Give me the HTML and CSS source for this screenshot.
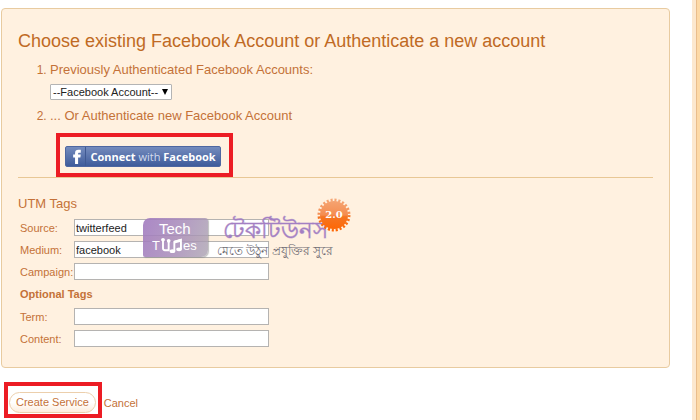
FILE: index.html
```html
<!DOCTYPE html>
<html lang="en">
<head>
<meta charset="utf-8">
<title>Create Service</title>
<link rel="stylesheet" href="styles.css">
</head>
<body>
<div class="page">
  <main class="content">
    <form>
      <div class="panel">
        <h1>Choose existing Facebook Account or Authenticate a new account</h1>
        <ol class="steps">
          <li>
            <label for="account">Previously Authenticated Facebook Accounts:</label>
            <div class="picker">
              <select id="account"><option>--Facebook Account--</option></select>
              <svg class="arrow" viewBox="0 0 6 6" aria-hidden="true"><path d="M0 0h6L3 6z"/></svg>
            </div>
          </li>
          <li><span>... Or Authenticate new Facebook Account</span></li>
        </ol>
        <div class="highlight connect-box">
          <button type="button" class="connect">
            <span class="fb"><svg viewBox="0 0 20 20" aria-hidden="true"><path d="M9 18v-7H7V8h2V6.500C9 4 10.300 3 12.500 3H15v3h-1.500c-1 0-1.300.3-1.300 1.200V8H15l-.4 3h-2.400v7z"/></svg></span>
            <span class="connect-text"><b>Connect</b> with <b>Facebook</b></span>
          </button>
        </div>
        <hr>
        <section class="tags">
          <h2>UTM Tags</h2>
          <div class="fields">
            <label for="source">Source:</label><input id="source" type="text" value="twitterfeed">
            <label for="medium">Medium:</label><input id="medium" type="text" value="facebook">
            <label for="campaign">Campaign:</label><input id="campaign" type="text">
            <h3>Optional Tags</h3>
            <label for="term">Term:</label><input id="term" type="text">
            <label for="content">Content:</label><input id="content" type="text">
          </div>
          <div class="watermark">
            <div class="badge">
              <span>Tech</span>
              <span class="tunes">T<svg viewBox="0 0 24 18" aria-hidden="true"><path class="line" d="M3 3v9q0 2 2 2h4V4M15 15V5l7-2v10"/><path d="M15 4l7-2v3l-7 2z"/><circle cx="3" cy="3" r="2"/><circle cx="9" cy="4" r="2"/><ellipse cx="13" cy="15" rx="3" ry="2"/><ellipse cx="20" cy="13" rx="3" ry="2"/></svg>es</span>
            </div>
            <div class="brand" lang="bn">
              <span class="name">টেকটিউনস</span>
              <span class="slogan">মেতে উঠুন প্রযুক্তির সুরে</span>
            </div>
            <svg class="seal" viewBox="0 0 34 34" aria-label="2.0">
              <defs><linearGradient id="seal-fill" gradientUnits="userSpaceOnUse" x1="0" y1="0" x2="0" y2="34"><stop offset="0" stop-color="#f5a878"/><stop offset=".5" stop-color="#f58d50"/><stop offset=".55" stop-color="#f57522"/><stop offset="1" stop-color="#ff6500"/></linearGradient></defs>
              <circle cx="17" cy="17" r="14" fill="url(#seal-fill)"/>
              <circle cx="17" cy="17" r="15" fill="none" stroke="url(#seal-fill)" stroke-width="3" stroke-dasharray="2.100 1.827"/>
              <text x="17" y="20" text-anchor="middle">2.0</text>
            </svg>
          </div>
        </section>
      </div>
      <div class="actions">
        <div class="highlight create-box"><button type="submit" class="create">Create Service</button></div>
        <a href="#">Cancel</a>
      </div>
    </form>
  </main>
  <div class="edge"></div>
</div>
</body>
</html>
```
FILE: styles.css
```css
* { box-sizing: border-box; }
body {
  margin: 0;
  background: #fff;
  color: #c47138;
  font: 12px/16px "Liberation Sans", Arial, sans-serif;
}
.page { display: flex; min-height: 100vh; }
.content { flex: 1; padding: 8px 22px 0 1px; }
.edge {
  width: 8px;
  background: #fdd9a6;
  border-left: 4px solid #fce8cf;
  box-shadow: inset 1px 0 #e9bd8c;
}
.panel {
  padding: 20px 16px;
  background: #fff1e0;
  border: 1px solid #e8cba0;
  border-radius: 4px;
}
h1, h2, h3 { margin: 0; font-weight: normal; }
h1 { color: #c06a24; font-size: 18px; line-height: 24px; }
.steps { margin: 8px 0 0; padding: 0 0 0 32px; font-size: 12px; }
.steps li { line-height: 18px; }
.steps label, .steps span { font-size: 13px; }
.picker { position: relative; width: 122px; margin: 5px 0 7px; }
select {
  display: block;
  width: 100%;
  height: 16px;
  padding: 0 2px;
  appearance: none;
  background: #fff;
  border: 1px solid #b4b4b4;
  border-radius: 1px;
  color: #222;
  font: 11px/14px "Liberation Sans", Arial, sans-serif;
}
.arrow { position: absolute; right: 4px; top: 5px; width: 6px; height: 6px; pointer-events: none; }
.highlight { width: fit-content; border: 4px solid #ec1c24; }
.connect-box { margin: 8px 0 0 38px; padding: 9px 8px 6px 5px; }
button { display: flex; align-items: center; cursor: pointer; }
.connect {
  width: 156px;
  height: 21px;
  padding: 0;
  background: linear-gradient(#748bbd, #3f5c9b);
  border: 1px solid #4e67a1;
  border-radius: 2px;
  color: #d3dcee;
  font: 11px/19px "Open Sans", sans-serif;
}
.connect b { color: #fff; }
.fb { width: 20px; height: 19px; border-right: 1px solid #3f5992; }
.fb svg { display: block; width: 20px; height: 19px; fill: #fff; }
.connect-text { flex: 1; text-align: center; white-space: nowrap; }
hr { margin: 0; border: 0; border-top: 1px solid #e8c795; }
.tags { position: relative; padding-top: 18px; }
h2 { font-size: 13px; line-height: 16px; }
.fields {
  display: grid;
  grid-template-columns: 53px minmax(0, 195px);
  grid-auto-rows: minmax(17px, auto);
  align-items: center;
  gap: 5px 1px;
  padding: 7px 2px 0;
}
.fields label { font-size: 11px; white-space: nowrap; }
.fields input {
  width: 100%;
  height: 17px;
  padding: 0 1px;
  border: 1px solid #b5b3b1;
  background: #fff;
  color: #222;
  font: 11px/15px "Liberation Sans", Arial, sans-serif;
}
h3 { grid-column: 1 / -1; font-size: 11px; line-height: 18px; font-weight: bold; }
.watermark { position: absolute; left: 125px; top: 20px; width: 210px; height: 62px; pointer-events: none; }
.badge {
  position: absolute;
  left: 0;
  top: 20px;
  width: 65px;
  height: 39px;
  padding: 3px 0 0 9px;
  background: linear-gradient(110deg, #a27bc0e6, #a78cb8d9 55%, #aaa2afcc);
  border-radius: 7px 3px 7px 2px;
  box-shadow: 1px 1px 1px #8888;
  color: #fff;
  font-size: 15px;
  line-height: 16px;
}
.badge span { display: block; padding-left: 7px; }
.badge .tunes { display: flex; align-items: center; padding: 0; font-size: 13px; }
.tunes svg { width: 23px; height: 17px; fill: #fff; }
.tunes .line { fill: none; stroke: #fff; stroke-width: 2; }
.brand { position: absolute; left: 74px; top: 18px; white-space: nowrap; }
.brand span { display: block; }
.name { padding-left: 6px; color: #a37fc3; font-size: 23px; line-height: 28px; -webkit-text-stroke: 1px #a37fc380; }
.slogan { color: #6b6870; font-size: 12px; line-height: 14px; }
.seal { position: absolute; right: 2px; top: 0; width: 34px; height: 34px; }
.seal text { fill: #fff; font: bold 10px "DejaVu Serif", serif; }
.actions { display: flex; align-items: center; gap: 2px; padding: 14px 0 0 3px; }
.create-box { padding: 6px 2px 1px 1px; }
.create {
  height: 21px;
  padding: 0 6px;
  background: linear-gradient(#fff 50%, #fdeddd);
  border: 1px solid #eccfac;
  border-radius: 11px;
  color: #c47138;
  font: 11px/19px "Liberation Sans", Arial, sans-serif;
}
a { padding-top: 6px; color: #c47138; font-size: 11px; text-decoration: none; }
```
